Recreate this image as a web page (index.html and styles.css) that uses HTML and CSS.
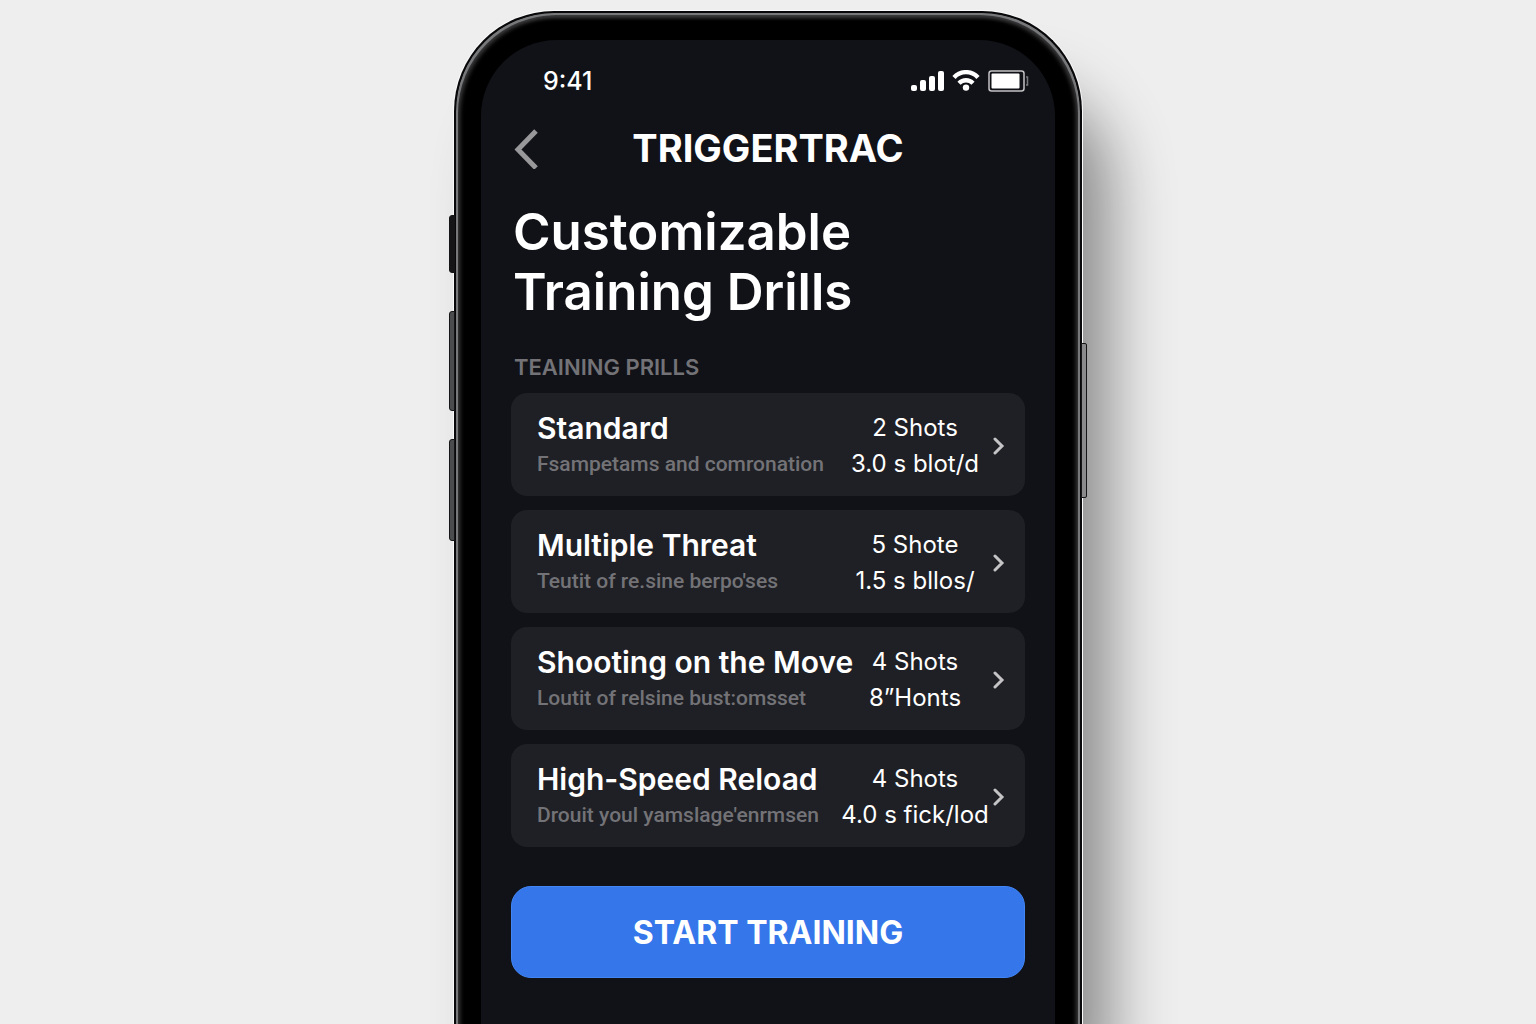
FILE: index.html
```html
<!DOCTYPE html>
<html lang="en">

<head>
    <meta charset="UTF-8">
    <meta name="viewport" content="width=device-width, initial-scale=1.0">
    <title>TriggerTrac</title>
    <link rel="stylesheet" href="styles.css">
</head>

<body>
    <div class="phone">
        <span class="side-key mute"></span>
        <span class="side-key volume-up"></span>
        <span class="side-key volume-down"></span>
        <span class="side-key power"></span>

        <div class="screen">
            <div class="status-bar">
                <span class="time">9:41</span>
                <div class="status-icons">
                    <svg width="33" height="21" viewBox="0 0 33 21" fill="#fff">
                        <rect x="0" y="14" width="6" height="6" rx="2" />
                        <rect x="9" y="9" width="6" height="11" rx="2" />
                        <rect x="18" y="5" width="6" height="15" rx="2" />
                        <rect x="27" y="0" width="6" height="20" rx="2" />
                    </svg>
                    <svg width="28" height="22" viewBox="0 0 28 22" fill="none" stroke="#fff" stroke-width="4.4">
                        <path d="M2 7.4C8.5 0.4 19.5 0.4 26 7.4" />
                        <path d="M7 13.2C11 9.2 17 9.2 21 13.2" />
                        <circle cx="14" cy="17.6" r="3.2" fill="#fff" stroke="none" />
                    </svg>
                    <svg width="41" height="22" viewBox="0 0 41 22" fill="none">
                        <rect x="1" y="1" width="35" height="20" rx="2.5" stroke="#c4c4c6" stroke-width="1.5" />
                        <rect x="3.5" y="3.5" width="28" height="15" rx="1" fill="#fff" />
                        <path d="M38 7H39.5V15H38" stroke="#77777b" stroke-width="1.5" />
                    </svg>
                </div>
            </div>

            <header class="app-header">
                <a class="back" href="#" aria-label="Back">
                    <svg width="26" height="42" viewBox="0 0 26 42" fill="none" stroke="#98989a" stroke-width="5">
                        <path d="M23 4L5 22.5L23 41" />
                    </svg>
                </a>
                <span class="brand">TRIGGERTRAC</span>
            </header>

            <main>
                <h1>Customizable Training Drills</h1>
                <h2>TEAINING PRILLS</h2>

                <ul class="drills">
                    <li>
                        <a class="drill" href="#">
                            <span class="info">
                                <span class="name">Standard</span>
                                <span class="desc">Fsampetams and comronation</span>
                            </span>
                            <span class="meta">
                                <span>2 Shots</span>
                                <span>3.0 s blot/d</span>
                            </span>
                            <svg class="chevron" viewBox="0 0 12 20"><path d="M2 3L9 10L2 17" /></svg>
                        </a>
                    </li>
                    <li>
                        <a class="drill" href="#">
                            <span class="info">
                                <span class="name">Multiple Threat</span>
                                <span class="desc">Teutit of re.sine berpo'ses</span>
                            </span>
                            <span class="meta">
                                <span>5 Shote</span>
                                <span>1.5 s bllos/</span>
                            </span>
                            <svg class="chevron" viewBox="0 0 12 20"><path d="M2 3L9 10L2 17" /></svg>
                        </a>
                    </li>
                    <li>
                        <a class="drill" href="#">
                            <span class="info">
                                <span class="name">Shooting on the Move</span>
                                <span class="desc">Loutit of relsine bust:omsset</span>
                            </span>
                            <span class="meta">
                                <span>4 Shots</span>
                                <span>8”Honts</span>
                            </span>
                            <svg class="chevron" viewBox="0 0 12 20"><path d="M2 3L9 10L2 17" /></svg>
                        </a>
                    </li>
                    <li>
                        <a class="drill" href="#">
                            <span class="info">
                                <span class="name">High-Speed Reload</span>
                                <span class="desc">Drouit youl yamslage'enrmsen</span>
                            </span>
                            <span class="meta">
                                <span>4 Shots</span>
                                <span>4.0 s fick/lod</span>
                            </span>
                            <svg class="chevron" viewBox="0 0 12 20"><path d="M2 3L9 10L2 17" /></svg>
                        </a>
                    </li>
                </ul>

                <button class="start" type="button">START TRAINING</button>
            </main>
        </div>
    </div>
</body>

</html>
```
FILE: styles.css
```css
* {
    box-sizing: border-box;
}

body {
    font-family: Inter, "Liberation Sans", sans-serif;
    background-color: #eeeeee;
    color: #ffffff;
    margin: 0;
    padding-top: 11px;
    min-height: 100vh;
    display: flex;
    flex-direction: column;
    align-items: center;
    overflow: hidden;
}

/* no bottom edge, the phone runs off the page */
.phone {
    position: relative;
    display: flex;
    flex: 1;
    width: 100%;
    max-width: 628px;
    padding: 27px 25px 0;
    background-color: #000000;
    border: 2px solid #08080a;
    border-bottom: none;
    border-radius: 100px 100px 0 0;
    box-shadow: inset 2px 2px 0 0 #77787a, inset -2px 2px 0 0 #77787a,
        inset 4px 4px 4px 0 #3c3c3e, inset -4px 4px 4px 0 #3c3c3e,
        0 0 0 1px #fafafa, 36px 70px 64px -10px rgba(0, 0, 0, 0.44);
}

.side-key {
    position: absolute;
    left: -7px;
    width: 6px;
    background-color: #4a4c4e;
    border: 1px solid #151517;
    border-radius: 3px 0 0 3px;
}

.mute {
    top: 202px;
    height: 58px;
    background-color: #151517;
}

.volume-up {
    top: 298px;
    height: 100px;
}

.volume-down {
    top: 426px;
    height: 102px;
}

.power {
    top: 330px;
    left: auto;
    right: -7px;
    height: 155px;
    background-color: #8a8a8c;
    border-radius: 0 2px 2px 0;
}

.screen {
    flex: 1;
    min-width: 0;
    padding: 26px 30px 0;
    background-color: #111217;
    border-radius: 76px 76px 0 0;
}

.status-bar {
    display: flex;
    align-items: center;
    justify-content: space-between;
    height: 30px;
    padding-left: 32px;
}

.time {
    font-size: 25px;
    font-weight: 500;
}

.status-icons {
    display: flex;
    align-items: center;
    gap: 8px;
    margin-right: -4px;
}

.app-header {
    display: grid;
    grid-template-columns: 1fr auto 1fr;
    align-items: center;
    height: 48px;
    margin-top: 28px;
}

.back {
    display: flex;
    padding-left: 2px;
}

.brand {
    font-size: 38px;
    font-weight: 700;
}

h1 {
    max-width: 400px;
    margin: 30px 0 0 2px;
    font-size: 51px;
    line-height: 60px;
    font-weight: 600;
}

h2 {
    margin: 31px 0 12px 3px;
    font-size: 22px;
    line-height: 28px;
    font-weight: 600;
    color: #737377;
}

.drills {
    display: flex;
    flex-direction: column;
    gap: 14px;
    margin: 0;
    padding: 0;
    list-style: none;
}

.drill {
    display: flex;
    align-items: center;
    padding: 17px 20px 14px 26px;
    background-color: #1f2025;
    border-radius: 16px;
    color: #ffffff;
    line-height: 36px;
    text-decoration: none;
    white-space: nowrap;
}

.info {
    display: flex;
    flex-direction: column;
    flex: 1;
    min-width: 0;
}

.name {
    font-size: 30px;
    font-weight: 600;
}

.desc {
    font-family: Roboto, "Liberation Sans", sans-serif;
    font-size: 21px;
    font-weight: 500;
    color: #737377;
}

.meta {
    display: flex;
    flex-direction: column;
    align-items: center;
    width: 140px;
    font-size: 24px;
}

.chevron {
    width: 12px;
    height: 20px;
    margin-left: 8px;
    fill: none;
    stroke: #c4c4c6;
    stroke-width: 3;
    stroke-linecap: round;
}

.start {
    display: block;
    width: 100%;
    height: 92px;
    margin-top: 39px;
    background-color: #3576eb;
    border: 1px solid #4285f5;
    border-radius: 20px;
    color: #ffffff;
    font-family: inherit;
    font-size: 32px;
    font-weight: 700;
    cursor: pointer;
}
```
